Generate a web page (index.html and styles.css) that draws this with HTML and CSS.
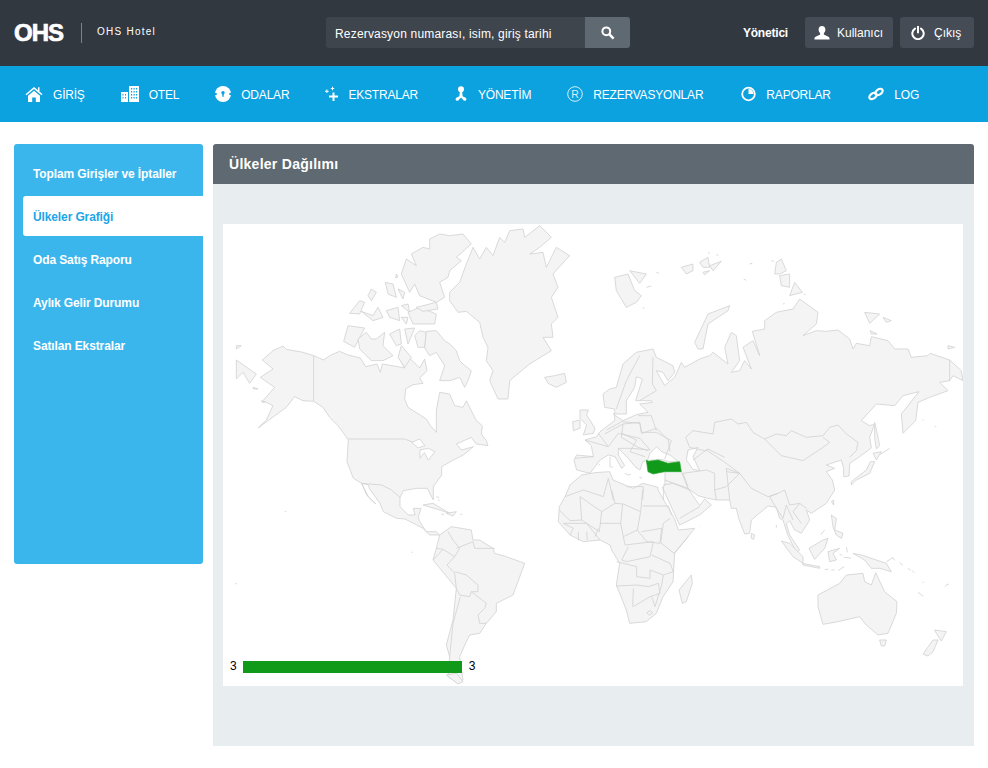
FILE: index.html
```html
<!DOCTYPE html>
<html lang="tr">
<head>
<meta charset="utf-8">
<title>OHS Hotel</title>
<link rel="stylesheet" href="styles.css">
</head>
<body>
<header class="topbar">
  <div class="brand"><span class="logo">OHS</span><span class="hotel">OHS Hotel</span></div>
  <form class="search">
    <div class="search-input">Rezervasyon numarası, isim, giriş tarihi</div>
    <div class="search-btn"><svg width="14" height="14" viewBox="0 0 14 14"><circle cx="5.300" cy="5.300" r="3.900" class="ico-line"/><path d="M8.200 8.200L12.600 12.600" class="ico-thick"/></svg></div>
  </form>
  <div class="userbox">
    <span class="role">Yönetici</span>
    <a class="tbtn tbtn-user"><svg width="16" height="14" viewBox="0 0 16 14"><path d="M8 0c2.200 0 3.400 1.600 3.400 3.600 0 1.600-.8 3-1.600 3.800v1.200l4.600 2.200c1 .5 1.200 1.100 1.200 2.700H.4c0-1.600.2-2.200 1.200-2.700l4.600-2.200V7.400C5.400 6.600 4.600 5.200 4.600 3.600 4.600 1.600 5.800 0 8 0z" fill="#fff"/></svg>Kullanıcı</a>
    <a class="tbtn tbtn-exit"><svg width="14" height="14" viewBox="0 0 14 14"><path d="M4 2.600a5.700 5.700 0 1 0 6 0" class="ico-line2"/><path d="M7 .5V6.500" class="ico-line2"/></svg>Çıkış</a>
  </div>
</header>
<nav class="mainnav">
  <a class="navitem"><svg width="18" height="16" viewBox="0 0 18 16"><path d="M9 1L0.500 8.200 1.500 9.200 9 3 16.500 9.200 17.500 8.200 14.500 5.600V1.200H13V4.300z" fill="#fff"/><path d="M3 9.800L9 4.800l6 5V16h-4.200v-4.500H7.200V16H3z" fill="#fff"/></svg>GİRİŞ</a>
  <a class="navitem"><svg width="18" height="16" viewBox="0 0 18 16"><path d="M0 6h7v10H0zM8 0h10v16H8z" fill="#fff"/><path d="M1.500 8h1v1.500h-1zM4 8h1v1.500H4zM1.500 11h1v1.500h-1zM4 11h1v1.500H4zM10 2h1.200v1.500H10zM12.500 2h1.200v1.500h-1.200zM15 2h1.200v1.500H15zM10 5h1.200v1.500H10zM12.500 5h1.200v1.500h-1.200zM15 5h1.200v1.500H15zM10 8h1.200v1.500H10zM12.500 8h1.200v1.500h-1.200zM15 8h1.200v1.500H15zM10 11h1.200v1.500H10zM12.500 11h1.200v1.500h-1.200zM15 11h1.200v1.500H15z" fill="#0ca1df"/></svg>OTEL</a>
  <a class="navitem"><svg width="16" height="16" viewBox="0 0 16 16"><circle cx="8" cy="8" r="8" fill="#fff"/><circle cx="8" cy="6.800" r="1.700" fill="#0ca1df"/><path d="M7.300 7.500h1.400v3.200H7.300zM0 7h1.700v2H0zM14.300 7H16v2h-1.700z" fill="#0ca1df"/></svg>ODALAR</a>
  <a class="navitem"><svg width="13" height="16" viewBox="0 0 13 16"><path d="M7.500 6.500h2v3H13v2H9.500V15h-2v-3.500H4v-2h3.500zM1.400 3.400h1v1.300h1.300v1H2.400V7h-1V5.700H0v-1h1.400zM7 .8h1V2h1.200v1H8v1.200H7V3H5.800V2H7z" fill="#fff"/></svg>EKSTRALAR</a>
  <a class="navitem"><svg width="14" height="16" viewBox="0 0 14 16"><circle cx="7" cy="3.200" r="3" fill="#fff"/><path d="M5.800 6h2.400l.4 4.200 2 1c1 .2 1.800.9 1.800 2 0 1-.9 1.600-1.800 1.600-1 0-1.800-.7-2-1.700L7 11.800l-1.600 1.300c-.2 1-1 1.700-2 1.700-.9 0-1.800-.6-1.800-1.600 0-1.100.8-1.800 1.800-2l2-1z" fill="#fff"/></svg>YÖNETİM</a>
  <a class="navitem"><svg width="16" height="16" viewBox="0 0 16 16"><circle cx="8" cy="8" r="7.300" fill="none" stroke="#d5f0fb" stroke-width="1"/><text x="8" y="11.700" text-anchor="middle" class="regmark">R</text></svg>REZERVASYONLAR</a>
  <a class="navitem nav-raporlar"><svg width="15" height="16" viewBox="0 0 15 16"><circle cx="7.500" cy="8" r="6.300" fill="none" stroke="#fff" stroke-width="1.800"/><path d="M7.500 3v5h5a5 5 0 0 0-5-5z" fill="#fff"/></svg>RAPORLAR</a>
  <a class="navitem nav-log"><svg width="16" height="16" viewBox="0 0 16 16"><ellipse cx="5" cy="10" rx="4" ry="2.600" transform="rotate(-35 5 10)" class="ico-link"/><ellipse cx="11" cy="6" rx="4" ry="2.600" transform="rotate(-35 11 6)" class="ico-link"/></svg>LOG</a>
</nav>
<div class="content">
  <aside class="sidebar">
    <a class="sideitem">Toplam Girişler ve İptaller</a>
    <a class="sideitem active">Ülkeler Grafiği</a>
    <a class="sideitem">Oda Satış Raporu</a>
    <a class="sideitem">Aylık Gelir Durumu</a>
    <a class="sideitem">Satılan Ekstralar</a>
  </aside>
  <main class="panel">
    <h1 class="panel-title">Ülkeler Dağılımı</h1>
    <div class="panel-body">
      <div class="mapbox">
        <svg class="worldmap" width="740" height="462" viewBox="0 0 2220 1386">
          <g class="land">
            <!-- North America -->
            <polygon points="118,408 150,380 180,366 190,376 240,385 272,395 302,408 320,395 350,382 372,392 412,402 428,428 462,420 472,445 478,420 525,428 545,432 530,405 560,402 590,432 605,405 612,440 590,462 600,478 570,482 548,495 545,525 555,550 610,585 622,605 640,625 640,560 650,505 680,510 695,545 720,550 730,530 760,590 778,605 775,630 790,650 795,665 760,660 745,640 700,660 716,678 751,668 721,693 691,708 656,728 656,753 631,788 631,828 613,793 581,793 541,800 531,820 531,848 556,873 576,873 571,853 594,853 586,878 590,893 610,923 640,923 650,933 645,933 620,933 600,913 581,903 546,885 521,883 481,863 471,838 440,795 436,783 416,778 391,763 372,713 376,648 360,625 345,605 330,590 320,580 300,550 272,532 240,530 215,518 190,550 135,590 105,612 130,588 150,545 120,530 155,490 112,460 150,435"/>
            <polygon points="416,778 436,818 458,840 431,813"/>
            <polygon class="water" points="566,655 590,645 606,665 585,672"/>
            <polygon class="water" points="591,703 591,678 616,673 636,683 616,708 604,686"/>
            <!-- Arctic Canada -->
            <polygon points="362,352 375,305 425,312 395,370"/>
            <polygon points="405,345 430,325 445,345 460,345 485,325 480,365 495,380 510,395 480,410 445,410 410,375"/>
            <polygon points="500,330 530,315 535,360 520,365"/>
            <polygon points="545,315 575,312 555,360"/>
            <polygon points="535,365 565,400 545,430 525,400"/>
            <polygon points="575,335 590,320 610,325 605,370 585,370"/>
            <polygon points="610,322 640,320 665,350 680,360 700,380 710,410 720,420 745,440 735,470 725,490 710,460 680,470 650,470 665,425 640,385 620,395 605,372"/>
            <polygon points="380,268 410,230 425,235 410,270"/>
            <polygon points="415,262 450,290 480,280 465,250 450,275"/>
            <polygon points="487,175 510,180 520,220 495,210"/>
            <polygon points="525,195 545,205 540,225"/>
            <polygon points="445,195 460,205 445,230 435,215"/>
            <polygon points="490,260 525,250 530,290 500,280"/>
            <polygon points="535,245 555,240 560,265"/>
            <polygon points="555,265 590,250 640,270 635,300 570,300"/>
            <polygon points="535,280 555,280 550,300"/>
            <polygon points="580,250 640,235 645,255 600,262"/>
            <polygon points="565,90 600,70 620,75 620,45 650,30 680,35 720,30 745,60 700,100 715,110 680,140 675,160 650,175 665,220 640,235 590,215 575,180 560,205 535,150 550,105 580,125"/>
            <!-- Greenland -->
            <polygon points="680,205 710,175 730,120 750,70 770,105 790,70 810,95 830,40 845,55 860,20 900,15 905,40 950,5 985,40 950,70 920,90 960,85 970,130 1000,70 1040,95 990,150 1005,190 985,220 1005,280 985,300 990,340 960,340 985,380 920,420 860,470 855,525 825,525 800,470 810,440 790,410 795,370 780,340 770,295 730,262 705,265 680,230"/>
            <polygon points="965,460 995,455 1025,448 1030,475 1000,490 975,478"/>
            <polygon points="40,408 100,450 80,478 60,445 40,465"/>
            <polygon points="40,365 55,365 40,375"/>
            <polygon points="90,490 105,495 92,495"/>
            <polygon points="115,530 125,535 118,535"/>
            <polygon points="520,150 525,158 518,162"/>
            <!-- Eurasia -->
            <polygon points="1140,510 1160,495 1180,490 1200,420 1240,385 1290,375 1300,400 1350,425 1355,445 1335,470 1320,445 1300,440 1325,485 1355,460 1375,415 1385,430 1430,405 1460,395 1470,385 1515,420 1505,370 1525,325 1540,335 1550,410 1525,445 1550,440 1565,410 1585,435 1560,370 1590,350 1610,395 1588,322 1625,315 1625,290 1660,265 1710,255 1730,225 1785,265 1780,300 1740,335 1780,320 1810,322 1845,318 1880,345 1890,375 1900,358 1940,365 1945,338 1995,350 2015,375 2055,375 2065,400 2115,395 2122,388 2180,408 2215,440 2220,470 2190,455 2180,470 2150,475 2175,500 2120,520 2085,535 2078,590 2040,628 2035,570 2088,503 2040,515 2015,545 1960,540 1915,590 1940,605 1955,600 1940,640 1945,672 1910,698 1880,718 1878,756 1862,758 1862,733 1855,708 1810,723 1835,733 1810,743 1828,768 1835,798 1810,838 1765,868 1750,858 1760,888 1735,928 1715,918 1700,890 1690,900 1700,933 1730,978 1720,985 1695,935 1680,888 1670,883 1660,850 1635,846 1585,888 1580,928 1565,930 1547,883 1540,853 1525,853 1520,828 1480,828 1450,822 1425,815 1395,793 1420,830 1430,845 1445,825 1465,843 1430,873 1370,903 1318,790 1326,783 1326,743 1276,743 1271,710 1259,713 1251,738 1236,728 1216,703 1186,673 1186,693 1205,725 1196,733 1176,698 1156,693 1131,708 1101,748 1061,738 1053,708 1061,693 1111,698 1105,665 1086,648 1121,638 1131,623 1155,605 1175,590 1175,555 1145,550"/>
            <g transform="translate(1110,0)">
              <polygon class="water" points="130,458 148,465 128,530 175,530 178,535 140,540 165,565 130,572 90,590 60,570 100,570 100,530 125,490"/>
              <polygon points="65,160 105,150 125,200 145,215 130,235 100,250 70,200"/>
              <polygon points="110,140 160,150 140,178"/>
              <polygon points="265,130 300,120 300,140 280,150"/>
              <polygon points="320,115 345,100 350,130 330,130"/>
              <polygon points="350,125 385,112 360,140"/>
              <polygon points="330,145 350,140 335,152"/>
              <polygon points="305,355 345,270 410,245 405,260 345,300 330,375 315,375"/>
              <polygon points="550,115 565,105 580,140 560,150 545,150"/>
              <polygon points="560,155 590,150 590,190 565,185"/>
              <polygon points="605,175 628,205 590,215"/>
              <polygon points="815,265 860,270 830,298"/>
              <polygon points="870,280 895,290 880,295"/>
              <polygon points="832,320 852,330 835,330"/>
              <polygon points="1065,365 1085,370 1065,375"/>
              <polygon points="845,595 855,640 860,665 850,675 845,640"/>
            </g>
            <g transform="translate(1110,648)">
              <polygon class="water" points="285,30 315,22 300,50 320,92 300,88 280,60"/>
              <polygon points="840,40 865,35 850,60"/>
              <polygon points="845,65 830,100 790,120 775,135 775,125 820,90 832,65"/>
              <polygon points="258,450 295,405 298,430 280,485 268,490"/>
              <polygon points="675,465 740,430 760,405 810,400 815,425 835,435 848,398 875,455 912,485 910,520 885,580 855,585 820,555 800,530 735,545 690,553 675,500"/>
              <polygon points="860,600 880,600 875,618 865,618"/>
              <polygon points="1025,570 1060,575 1045,603 1030,580"/>
              <polygon points="1020,600 1035,600 1020,635 1005,648 990,642"/>
              <polygon points="805,345 880,370 895,395 860,385 835,385 815,360 780,340"/>
              <polygon points="648,325 690,300 705,295 695,325 665,358"/>
              <polygon points="565,303 590,310 630,350 630,370 600,350"/>
              <polygon points="628,370 680,380 680,385 630,375"/>
              <polygon points="705,335 740,325 720,340 730,360 710,365"/>
              <polygon points="715,225 730,235 725,270 750,280 745,295 730,285 720,260"/>
              <polygon points="715,185 722,180 722,195"/>
              <polygon points="475,280 485,285 482,298 475,295"/>
            </g>
            <g transform="translate(981,498)">
              <polygon class="water" points="292,212 300,190 320,170 335,185 360,195 385,215 360,215 330,208"/>
              <polygon points="90,60 115,60 110,75 135,115 130,130 100,135 110,105 90,85"/>
              <polygon points="68,95 90,90 90,115 70,122"/>
            </g>
            <!-- Africa -->
            <polygon points="1026,818 1041,783 1076,753 1116,746 1160,743 1170,768 1230,793 1260,778 1305,790 1305,798 1355,885 1366,918 1415,913 1355,988 1350,1073 1320,1118 1300,1168 1270,1193 1220,1198 1210,1158 1180,1083 1190,1018 1166,978 1161,963 1131,948 1081,953 1041,933 1006,893 1009,848"/>
            <!-- South America -->
            <g transform="translate(0,708)">
              <polygon points="650,225 685,200 745,210 750,240 770,240 810,265 815,280 850,290 905,310 870,405 820,430 820,455 790,490 770,520 740,525 730,545 710,590 720,660 705,670 675,650 680,590 670,555 690,480 700,385 630,300 640,265"/>
              <polygon points="670,645 700,640 720,665 705,672"/>
              <polygon points="600,135 630,130 680,160 650,150"/>
              <polygon points="670,160 700,155 690,168"/>
            </g>
          </g>
          <g class="borders">
            <path d="M272,395V532M376,645H545L570,655M416,778L476,783 506,798 531,820"/>
            <g transform="translate(0,708)">
              <path d="M630,300L660,268 640,265M660,268L695,290 710,265 690,240 675,215M700,265L750,245 755,265 815,265M695,290L672,315 695,340 700,385M695,335L730,345 765,375 765,395 745,395 740,410 710,405 700,385M712,410L690,490 680,590M745,395L790,430 785,445 765,465 770,490 790,490"/>
              <path d="M185,155h5M35,372l6,-2M566,275l2,4M640,110l8,3M645,120l5,1M655,163h8M712,163h6"/>
            </g>
            <g transform="translate(1110,0)">
              <path d="M278,640L300,620 360,630 365,595 415,585 435,600 460,595 480,625 515,645 550,630 580,635 595,620 640,640 690,635 710,610 735,603 760,630 795,655 790,680 770,700M515,645L565,695 630,710 690,670 710,655 690,640M278,640L290,670 335,680 345,675 395,700M1070,408V470M140,395L100,470 70,555M180,400L178,480 190,500 140,530M90,600L140,595 145,625 190,625 235,650 215,705M35,630L90,600 85,640 135,670 165,680M135,575L175,575 190,620"/>
              <path d="M150,250l4,5M190,145l8,3M160,190l15,-4M345,85l5,3M370,92l6,2M470,120l8,-2M452,165l8,4M535,110l8,2M570,240l5,-2M632,210l6,2M988,587l4,3M1025,608h5"/>
            </g>
            <g transform="translate(1110,648)">
              <path d="M400,85L440,100 475,145 525,170 555,160 575,150 590,195 620,190 640,205M400,85L410,180M285,140L270,100 340,90 365,100 365,150 370,180M365,150L400,140 440,100 400,95M300,60L340,30 400,70 440,100M265,95L285,145M215,120L285,145M210,135L240,130 290,150M260,235L320,200M555,160L530,170 550,205 570,235 580,195M620,190L600,215 625,250M580,195L600,240"/>
              <path d="M890,25l-28,18M550,255v8M320,258l2,2M695,270l-12,14M695,388h12M715,390h10M735,392l18,-12M740,343l8,3M752,352h10M762,352l12,3M760,322l3,15M880,365l20,-12 5,8M920,368l10,8M945,385l8,6M958,393l6,5M990,425v4M1055,440l5,-5 8,-3M975,457l16,12"/>
            </g>
            <g transform="translate(981,498)">
              <path d="M105,150L175,170M145,130L175,170 205,130 270,145 300,180M75,205L130,200M170,120L215,95 270,100 275,130 320,115 355,150 360,185M215,130L260,150 240,185 285,200M205,175L245,175 300,180"/>
              <path d="M45,320L100,300 160,320 175,265M175,265L190,330M230,290L280,290 278,330M340,290V330"/>
              <path d="M180,200v30l8,2M145,225l5,-3M225,250l10,5 8,-3M268,262l8,2"/>
            </g>
            <g transform="translate(981,798)">
              <path d="M90,20L95,90 60,92 28,60M90,20L155,65 195,40 185,0M155,65L148,125 110,100 95,90M195,40L220,42 272,65 278,0M278,48H355L365,75M272,65L262,120 220,140 212,100 150,100M218,42L212,100M262,120L290,155 330,160 335,115 275,125M360,85L340,100 332,158 372,190 415,140M220,140L225,165 310,155 300,200 230,215 215,210 235,170M305,195L360,220 370,245 340,255 300,240M200,215L260,230 260,260 300,265 300,240M198,288L260,285 295,290 325,280 330,310 300,320 250,350M250,295L248,350M340,255L335,285 315,350 305,320M60,135L70,115 40,100 110,100 150,150M85,125V152M110,125L112,150M135,140L145,115M300,362L308,368 298,376 290,368Z"/>
            </g>
          </g>
          <polygon class="turkey" points="1270,708 1276,712 1305,708 1335,718 1370,713 1375,743 1325,743 1290,750 1275,743"/>
        </svg>
        <div class="legend"><span>3</span><i class="legend-bar"></i><span>3</span></div>
      </div>
    </div>
  </main>
</div>
</body>
</html>
```
FILE: styles.css
```css
* { box-sizing: border-box; }
html, body { margin: 0; padding: 0; background: #fff; }
body { font-family: "Liberation Sans", Arial, sans-serif; font-size: 12px; color: #fff; overflow: hidden; }
a { display: flex; align-items: center; }

.topbar { height: 66px; background: #323840; display: flex; align-items: center; padding: 0 14px 1px; }
.brand { display: flex; align-items: center; width: 312px; }
.logo { font-size: 24px; font-weight: bold; letter-spacing: -1px; -webkit-text-stroke: .7px #fff; width: 67px; line-height: 20px; height: 20px; }
.hotel { font-size: 10px; letter-spacing: 1.250px; border-left: 1px solid #7d8288; padding-left: 15px; height: 20px; line-height: 18px; }
.search { display: flex; height: 31px; margin: 0; }
.search-input { width: 259px; background: #3f454d; border-radius: 3px 0 0 3px; line-height: 34px; padding-left: 9px; white-space: nowrap; letter-spacing: .18px; }
.search-btn { width: 45px; background: #5f6972; border-radius: 0 3px 3px 0; display: flex; align-items: center; justify-content: center; }
.ico-line { fill: none; stroke: #fff; stroke-width: 2; }
.ico-thick { fill: none; stroke: #fff; stroke-width: 2.600; }
.ico-line2 { fill: none; stroke: #fff; stroke-width: 2; stroke-linecap: round; }
.ico-link { fill: none; stroke: #fff; stroke-width: 2.200; }
.userbox { margin-left: auto; display: flex; align-items: center; }
.role { font-weight: bold; margin-right: 17px; letter-spacing: -.2px; }
.tbtn { height: 31px; background: #464c55; border-radius: 3px; gap: 7px; }
.tbtn-user { width: 88px; padding-left: 9px; margin-right: 7px; }
.tbtn-exit { width: 74px; padding-left: 11px; gap: 9px; }

.mainnav { height: 56px; background: #0ca1df; display: flex; align-items: center; padding-left: 25px; gap: 36px; }
.navitem { gap: 10px; white-space: nowrap; letter-spacing: -.2px; line-height: 17px; padding-top: 2px; }
.navitem svg { margin-bottom: 2px; }
.nav-raporlar { margin-left: 2px; }
.nav-log { margin-left: 1.500px; }
.regmark { font-size: 10.500px; fill: #d5f0fb; font-family: "Liberation Sans", Arial, sans-serif; }

.content { display: flex; padding: 22px 14px; gap: 10px; align-items: flex-start; }
.sidebar { width: 189px; height: 420px; flex: none; background: #3bb6ec; border-radius: 3px; padding: 9px 0 0 9px; display: flex; flex-direction: column; gap: 3px; }
.sideitem { height: 40px; padding: 1px 0 0 10px; font-weight: bold; white-space: nowrap; letter-spacing: -.12px; }
.sideitem.active { background: #fff; color: #1ba6e8; border-radius: 3px 0 0 3px; }

.panel { flex: 1; height: 602px; display: flex; flex-direction: column; }
.panel-title { margin: 0; height: 40px; background: #5f6972; border-radius: 3px 3px 0 0; font-size: 14px; font-weight: bold; line-height: 41px; padding-left: 16px; letter-spacing: .27px; }
.panel-body { flex: 1; background: #e8edf0; padding: 40px 11px 60px 10px; }
.mapbox { position: relative; height: 462px; background: #fff; }
.worldmap { display: block; }
.land polygon { fill: #f4f4f4; stroke: #d2d2d2; stroke-width: 2.500; stroke-linejoin: round; }
.land polygon.water { fill: #fff; }
.borders path { fill: none; stroke: #d2d2d2; stroke-width: 2.500; stroke-linejoin: round; }
.turkey { fill: #119a1a; stroke: #2ba632; stroke-width: 2; }
.legend { position: absolute; left: 7px; top: 435px; display: flex; align-items: center; gap: 6.500px; color: #000; font-size: 12px; line-height: 14px; }
.legend-bar { display: block; width: 219px; height: 12px; margin-top: 1px; background: #119a1a; }
```
